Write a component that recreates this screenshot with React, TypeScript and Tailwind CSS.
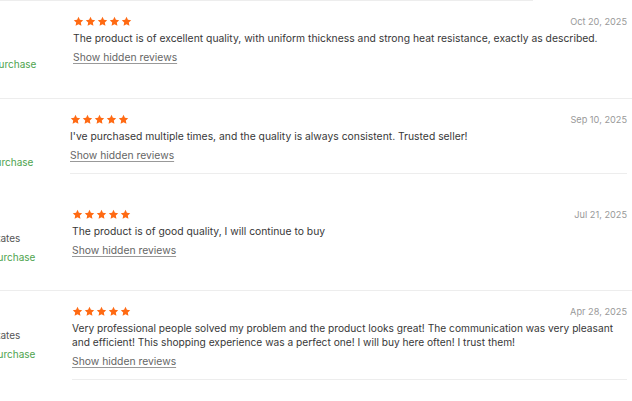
import React from "react";

type Review = {
  user: string;
  country?: string;
  date: string;
  text: string;
  pad: string;
  shift: string;
  size: string;
  line: "full" | "inner";
};

const reviews: Review[] = [
  {
    user: "B***r",
    country: "",
    date: "Oct 20, 2025",
    text: "The product is of excellent quality, with uniform thickness and strong heat resistance, exactly as described.",
    pad: "pt-[14px] pb-[27px]",
    shift: "ml-0",
    size: "text-[10.35px]",
    line: "full",
  },
  {
    user: "D***k",
    country: "",
    date: "Sep 10, 2025",
    text: "I've purchased multiple times, and the quality is always consistent. Trusted seller!",
    pad: "pt-[14px] pb-[22px]",
    shift: "ml-[-3px]",
    size: "text-[10.35px]",
    line: "inner",
  },
  {
    user: "K***a",
    country: "United States",
    date: "Jul 21, 2025",
    text: "The product is of good quality, I will continue to buy",
    pad: "pt-[12px] pb-[26px]",
    shift: "ml-[-1px]",
    size: "text-[10.35px]",
    line: "full",
  },
  {
    user: "L***e",
    country: "United States",
    date: "Apr 28, 2025",
    text: "Very professional people solved my problem and the product looks great! The communication was very pleasant and efficient! This shopping experience was a perfect one! I will buy here often! I trust them!",
    pad: "pt-[14px] pb-[20px]",
    shift: "ml-[-1px]",
    size: "text-[10.2px]",
    line: "inner",
  },
];

const Star = () => (
  <svg viewBox="0 0 24 24" className="h-[11px] w-[11px]" fill="#ff6a13">
    <path d="M12 1.8l3.1 6.6 7.2.9-5.3 5 1.4 7.1L12 17.9l-6.4 3.5 1.4-7.1-5.3-5 7.2-.9z" />
  </svg>
);

const ReviewRow = ({ r }: { r: Review }) => (
  <div className={r.line === "full" ? "border-b border-[#ededed]" : ""}>
    <div className={`flex ${r.shift} ${r.pad}`}>
      <div className="w-[123px] shrink-0 pt-[1px] pl-[3px] text-[10px] leading-[13px]">
        <div className="text-[#333]">{r.user}</div>
        <div className="mt-[10px] h-[13px] pl-[5px] text-[#555]">{r.country}</div>
        <div className="mt-[6px] text-[#4ea34e]">Verified purchase</div>
      </div>
      <div className="flex-1 pr-[5px]">
        <div className={r.line === "inner" ? "border-b border-[#ededed] pb-[11px]" : ""}>
          <div className="flex items-start justify-between">
            <div className="flex gap-[1px] pt-[1px]">
              <Star />
              <Star />
              <Star />
              <Star />
              <Star />
            </div>
            <div className="text-[9.2px] leading-[13px] text-[#999]">{r.date}</div>
          </div>
          <p className={`mt-[3px] ${r.size} leading-[14px] text-[#383838]`}>{r.text}</p>
          <button className="mt-[5px] block text-[10.35px] leading-[14px] text-[#666] underline decoration-[#999] underline-offset-2">
            Show hidden reviews
          </button>
        </div>
      </div>
    </div>
  </div>
);

export default function App() {
  return (
    <div
      className="h-[401px] w-[632px] overflow-hidden bg-white"
      style={{ fontFamily: "Inter, 'Liberation Sans', sans-serif" }}
    >
      <div className="ml-[-50px] w-[682px]">
        <div className="h-[1px] w-[583px] bg-[#ededed]" />
        {reviews.map((r) => (
          <ReviewRow key={r.date} r={r} />
        ))}
      </div>
    </div>
  );
}
